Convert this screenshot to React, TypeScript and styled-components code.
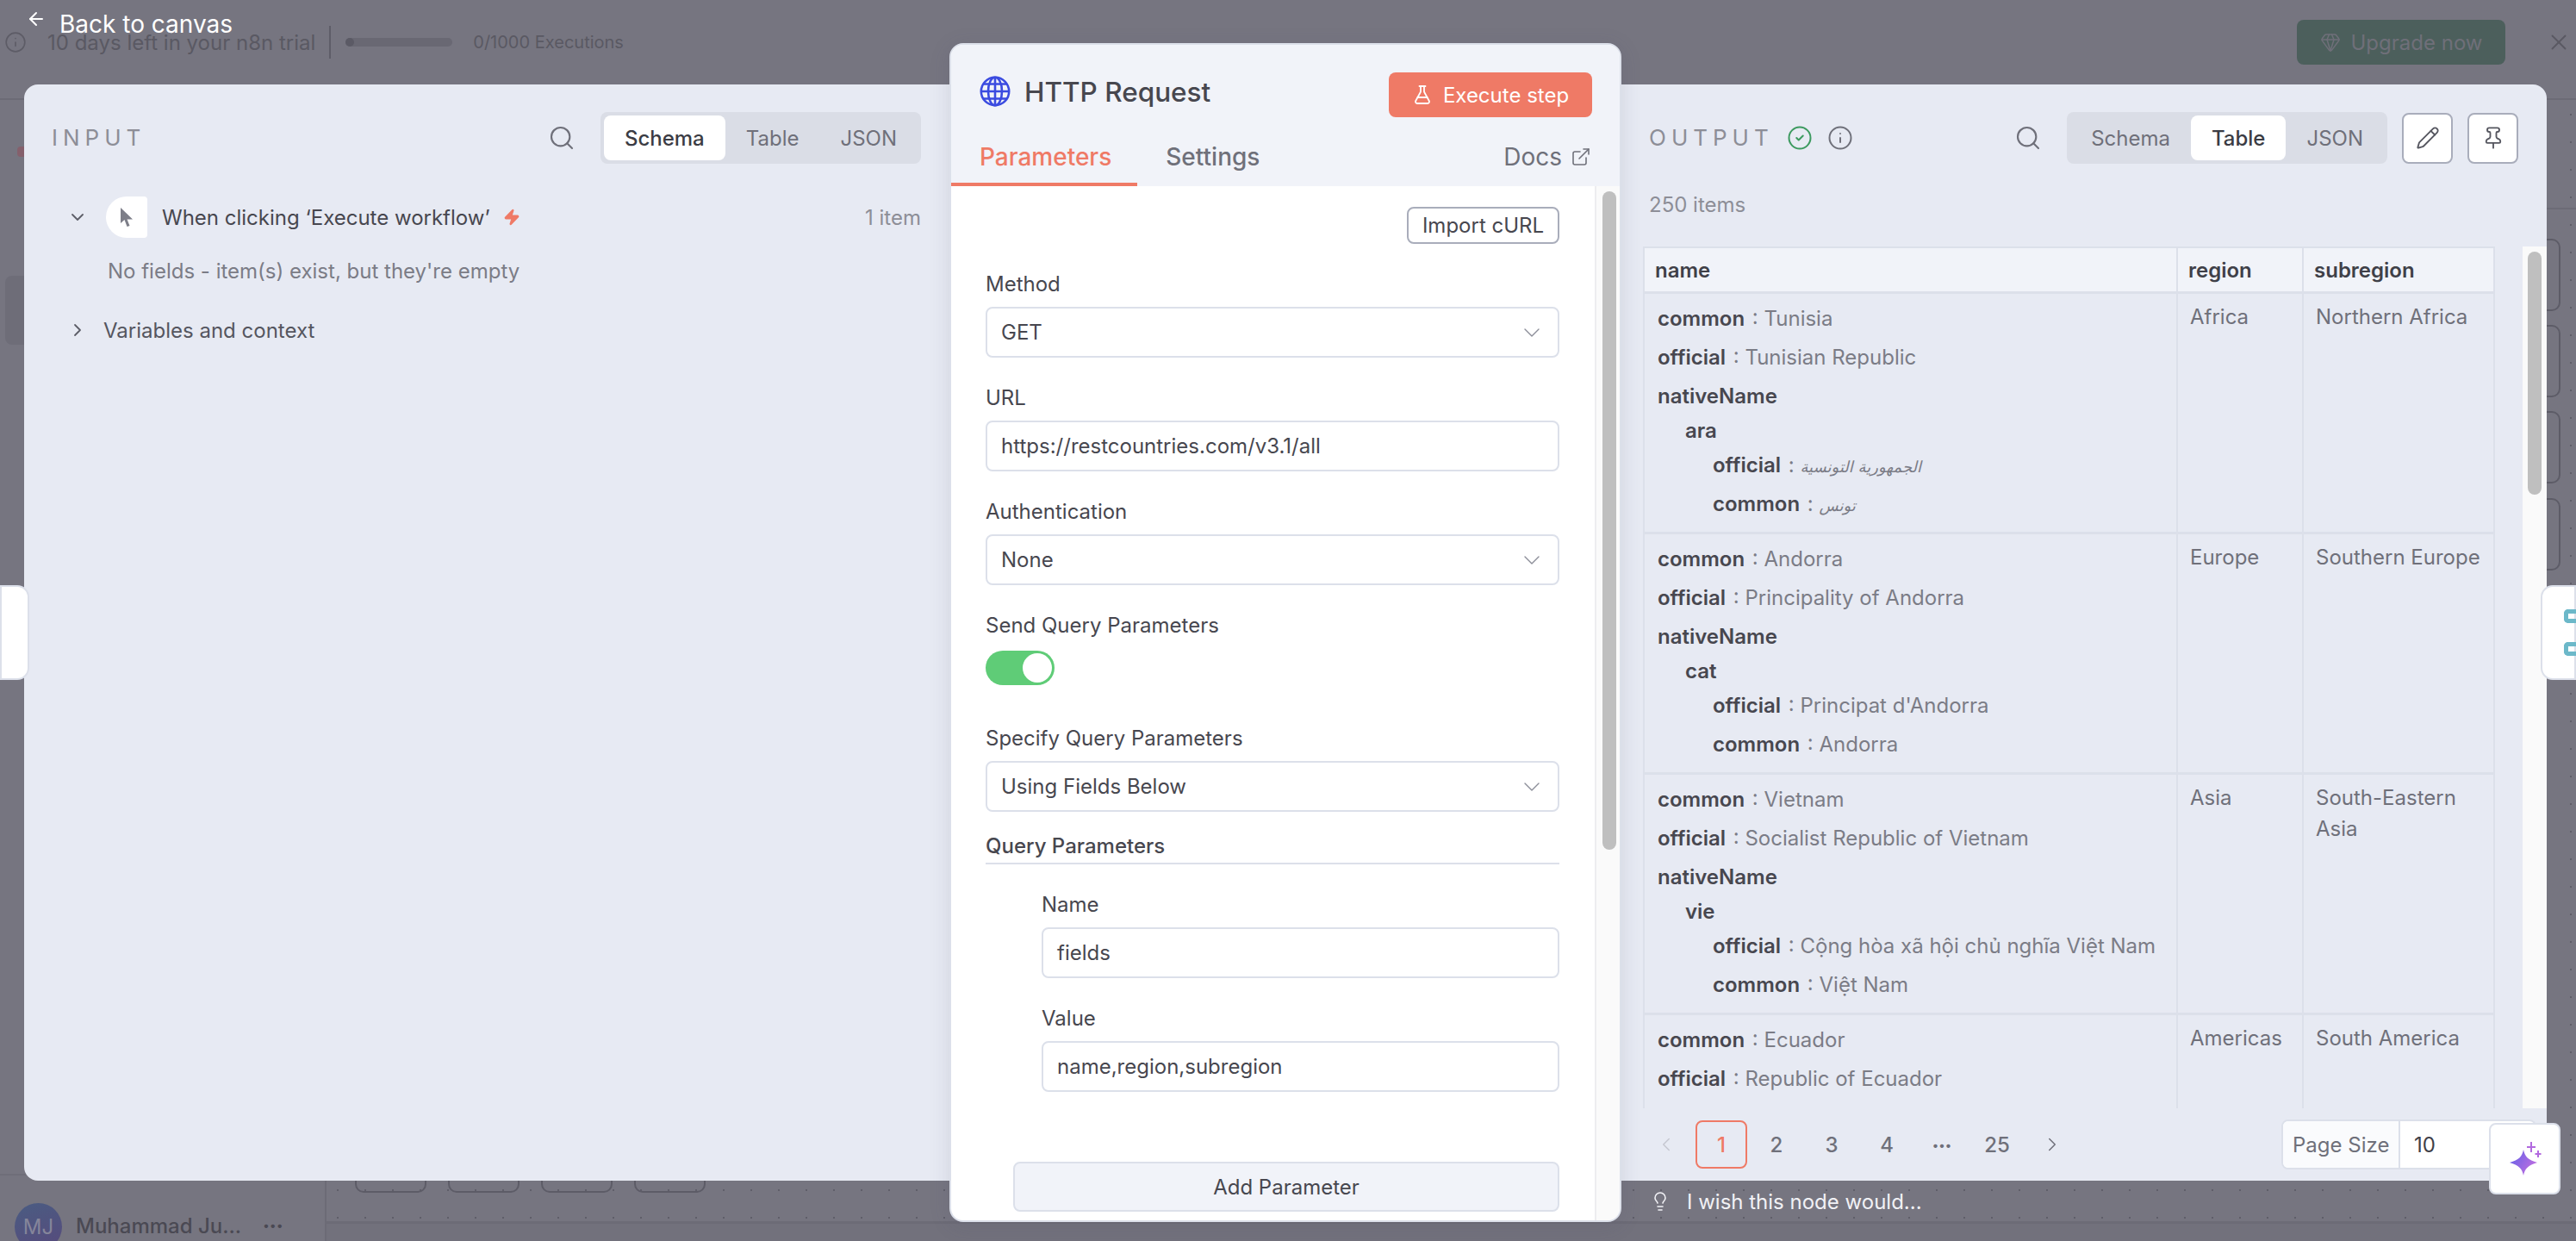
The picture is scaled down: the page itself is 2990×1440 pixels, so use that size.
import { Fragment } from 'react';
import styled, { createGlobalStyle } from 'styled-components';
import {
  ArrowLeft,
  ChevronDown,
  ChevronLeft,
  ChevronRight,
  CircleCheck,
  ExternalLink,
  FlaskConical,
  Gem,
  Info,
  Lightbulb,
  Pencil,
  Pin,
  Search,
  X,
  Zap,
} from 'lucide-react';

type Line = { key: string; value?: string; depth?: number; rtl?: boolean };
type Country = { lines: Line[]; region: string; subregion: string };

const countries: Country[] = [
  {
    region: 'Africa',
    subregion: 'Northern Africa',
    lines: [
      { key: 'common', value: 'Tunisia' },
      { key: 'official', value: 'Tunisian Republic' },
      { key: 'nativeName' },
      { key: 'ara', depth: 1 },
      { key: 'official', value: 'الجمهورية التونسية', depth: 2, rtl: true },
      { key: 'common', value: 'تونس', depth: 2, rtl: true },
    ],
  },
  {
    region: 'Europe',
    subregion: 'Southern Europe',
    lines: [
      { key: 'common', value: 'Andorra' },
      { key: 'official', value: 'Principality of Andorra' },
      { key: 'nativeName' },
      { key: 'cat', depth: 1 },
      { key: 'official', value: "Principat d'Andorra", depth: 2 },
      { key: 'common', value: 'Andorra', depth: 2 },
    ],
  },
  {
    region: 'Asia',
    subregion: 'South-Eastern Asia',
    lines: [
      { key: 'common', value: 'Vietnam' },
      { key: 'official', value: 'Socialist Republic of Vietnam' },
      { key: 'nativeName' },
      { key: 'vie', depth: 1 },
      { key: 'official', value: 'Cộng hòa xã hội chủ nghĩa Việt Nam', depth: 2 },
      { key: 'common', value: 'Việt Nam', depth: 2 },
    ],
  },
  {
    region: 'Americas',
    subregion: 'South America',
    lines: [
      { key: 'common', value: 'Ecuador' },
      { key: 'official', value: 'Republic of Ecuador' },
      { key: 'nativeName' },
    ],
  },
];

const canvasButtons = [33, 141, 249, 357];
const canvasCards = [161, 261, 361, 462];

const GlobeIcon = () => (
  <svg width="36" height="36" viewBox="0 0 36 36" fill="none" stroke="#3b4be0" strokeWidth="2.6">
    <circle cx="18" cy="18" r="16.2" />
    <ellipse cx="18" cy="18" rx="8" ry="16.2" />
    <path d="M18 2v32M2 18h32M4.500 9.500h27M4.500 26.500h27" />
  </svg>
);

const CursorIcon = () => (
  <svg width="16" height="24" viewBox="0 0 16 24" fill="#7d7e88">
    <path d="M1 1v18l4.500-4 3 8 3-1-3-7.500H15z" />
  </svg>
);

const ViewSwitch = ({ active }: { active: string }) => (
  <SwitchWrap>
    {['Schema', 'Table', 'JSON'].map((name) => (
      <SwitchItem key={name} $active={name === active}>
        {name}
      </SwitchItem>
    ))}
  </SwitchWrap>
);

const SelectField = ({ label, value }: { label: string; value: string }) => (
  <Field>
    <FieldLabel>{label}</FieldLabel>
    <Control>
      {value}
      <ChevronDown size={32} strokeWidth={1} color="#8b8d98" />
    </Control>
  </Field>
);

const InputField = ({ label, value }: { label: string; value: string }) => (
  <Field>
    <FieldLabel>{label}</FieldLabel>
    <Control>{value}</Control>
  </Field>
);

const Backdrop = () => (
  <Fragment>
    <TopBar>
      <Info size={26} strokeWidth={1.5} color="#5d5c66" />
      <TrialText>10 days left in your n8n trial</TrialText>
      <TrialDivider />
      <TrialTrack>
        <TrialDot />
      </TrialTrack>
      <TrialText $small>0/1000 Executions</TrialText>
      <UpgradeButton>
        <Gem size={24} strokeWidth={1.5} />
        Upgrade now
      </UpgradeButton>
      <X size={30} strokeWidth={1.5} color="#5a5963" />
    </TopBar>
    <Workspace>
      <Sidebar>
        <LogoPiece />
        <SideItem />
        <SideFooter>
          <Avatar>MJ</Avatar>
          <UserName>Muhammad Ju...</UserName>
          <UserDots>•••</UserDots>
        </SideFooter>
      </Sidebar>
      <Canvas>
        <CanvasHeaderLine />
        {canvasButtons.map((x) => (
          <CanvasButton key={x} $x={x} />
        ))}
        {canvasCards.map((y) => (
          <CanvasCard key={y} $y={y} />
        ))}
        <CanvasFooter />
      </Canvas>
    </Workspace>
  </Fragment>
);

const InputPanel = () => (
  <SidePanel $side="left">
    <PanelHeader>
      <PanelTitle>INPUT</PanelTitle>
      <HeaderSpacer />
      <Search size={32} strokeWidth={1.6} color="#6f707a" />
      <ViewSwitch active="Schema" />
    </PanelHeader>
    <NodeRow>
      <ChevronDown size={24} strokeWidth={1.8} color="#5d5e68" />
      <NodeIcon>
        <CursorIcon />
      </NodeIcon>
      <NodeName>When clicking ‘Execute workflow’</NodeName>
      <Zap size={20} fill="#ef7a66" color="#ef7a66" />
      <ItemCount>1 item</ItemCount>
    </NodeRow>
    <EmptyNote>No fields - item(s) exist, but they're empty</EmptyNote>
    <VariablesRow>
      <ChevronRight size={24} strokeWidth={1.8} color="#5d5e68" />
      Variables and context
    </VariablesRow>
  </SidePanel>
);

const MainPanel = () => (
  <CenterPanel>
    <CenterHead>
      <TitleRow>
        <TitleGroup>
          <GlobeIcon />
          <NodeTitle>HTTP Request</NodeTitle>
        </TitleGroup>
        <ExecuteButton>
          <FlaskConical size={24} strokeWidth={1.8} />
          Execute step
        </ExecuteButton>
      </TitleRow>
      <TabRow>
        <Tab $active>Parameters</Tab>
        <Tab>Settings</Tab>
        <DocsLink>
          Docs
          <ExternalLink size={24} strokeWidth={1.6} />
        </DocsLink>
      </TabRow>
    </CenterHead>
    <CenterBody>
      <Form>
        <ImportRow>
          <ImportButton>Import cURL</ImportButton>
        </ImportRow>
        <SelectField label="Method" value="GET" />
        <InputField label="URL" value="https://restcountries.com/v3.1/all" />
        <SelectField label="Authentication" value="None" />
        <ToggleField>
          <ToggleLabel>Send Query Parameters</ToggleLabel>
          <Toggle>
            <ToggleKnob />
          </Toggle>
        </ToggleField>
        <SelectField label="Specify Query Parameters" value="Using Fields Below" />
        <SectionTitle>Query Parameters</SectionTitle>
        <ParamGroup>
          <InputField label="Name" value="fields" />
          <InputField label="Value" value="name,region,subregion" />
        </ParamGroup>
        <AddParameter>Add Parameter</AddParameter>
      </Form>
      <Scrollbar $wide>
        <FormThumb />
      </Scrollbar>
    </CenterBody>
  </CenterPanel>
);

const OutputPanel = () => (
  <SideColumn>
    <SidePanel $side="right">
      <PanelHeader>
        <PanelTitle>OUTPUT</PanelTitle>
        <StatusIcons>
          <CircleCheck size={30} strokeWidth={1.6} color="#3c9a5f" />
          <Info size={30} strokeWidth={1.6} color="#6f707a" />
        </StatusIcons>
        <HeaderSpacer />
        <Search size={32} strokeWidth={1.6} color="#6f707a" />
        <ViewSwitch active="Table" />
        <IconButton>
          <Pencil size={28} strokeWidth={1.6} />
        </IconButton>
        <IconButton>
          <Pin size={28} strokeWidth={1.6} />
        </IconButton>
      </PanelHeader>
      <ItemsLabel>250 items</ItemsLabel>
      <TableArea>
        <TableClip>
          <DataTable>
            <colgroup>
              <col width={619} />
              <col width={146} />
              <col width={222} />
            </colgroup>
            <thead>
              <tr>
                <HeadCell>name</HeadCell>
                <HeadCell>region</HeadCell>
                <HeadCell>subregion</HeadCell>
              </tr>
            </thead>
            <tbody>
              {countries.map((country) => (
                <tr key={country.region}>
                  <NameCell>
                    {country.lines.map((line, index) => (
                      <TreeLine key={index} $depth={line.depth ?? 0}>
                        <TreeKey>{line.key}</TreeKey>
                        {line.value && (
                          <TreeValue>
                            {' : '}
                            {line.rtl ? <ArabicText>{line.value}</ArabicText> : line.value}
                          </TreeValue>
                        )}
                      </TreeLine>
                    ))}
                  </NameCell>
                  <TextCell>{country.region}</TextCell>
                  <TextCell>{country.subregion}</TextCell>
                </tr>
              ))}
            </tbody>
          </DataTable>
        </TableClip>
        <Scrollbar>
          <TableThumb />
        </Scrollbar>
      </TableArea>
      <Pager>
        <PageSlot $muted>
          <ChevronLeft size={26} strokeWidth={1.4} />
        </PageSlot>
        <PageSlot $active>1</PageSlot>
        <PageSlot>2</PageSlot>
        <PageSlot>3</PageSlot>
        <PageSlot>4</PageSlot>
        <PageSlot $dots>•••</PageSlot>
        <PageSlot>25</PageSlot>
        <PageSlot>
          <ChevronRight size={26} strokeWidth={1.4} />
        </PageSlot>
        <PageSize>
          <PageSizeLabel>Page Size</PageSizeLabel>
          <PageSizeValue>10</PageSizeValue>
        </PageSize>
      </Pager>
      <AskButton>
        <svg width="46" height="46" viewBox="0 0 46 46">
          <defs>
            <linearGradient id="spark" x1="0" y1="0" x2="1" y2="0.6">
              <stop offset="0" stopColor="#5d5fe8" />
              <stop offset="1" stopColor="#c06fe0" />
            </linearGradient>
          </defs>
          <path
            d="M21 12c1.500 8 5.500 12 16 15-10.500 3-14.500 7-16 15-1.500-8-5.500-12-16-15 10.500-3 14.500-7 16-15z"
            fill="url(#spark)"
          />
          <path d="M30 3v12M25 9h10M38 13v8M34.500 17h7" stroke="#b26adf" strokeWidth="2" />
        </svg>
      </AskButton>
    </SidePanel>
    <FeedbackRow>
      <Lightbulb size={24} strokeWidth={1.6} />
      I wish this node would...
    </FeedbackRow>
  </SideColumn>
);

export default function App() {
  return (
    <Page>
      <GlobalStyle />
      <Backdrop />
      <Overlay>
        <BackLink>
          <ArrowLeft size={24} strokeWidth={2} />
          <BackText>Back to canvas</BackText>
        </BackLink>
        <InputPanel />
        <MainPanel />
        <OutputPanel />
        <EdgeHandle $side="left" />
        <EdgeHandle $side="right">
          <HandleMark />
          <HandleMark />
        </EdgeHandle>
      </Overlay>
    </Page>
  );
}

const GlobalStyle = createGlobalStyle`
  html, body {
    margin: 0;
    padding: 0;
    background: #767580;
  }
  * {
    box-sizing: border-box;
  }
`;

const Page = styled.div`
  position: relative;
  width: 2990px;
  height: 1440px;
  overflow: hidden;
  background: #767580;
  font-family: Inter, 'Liberation Sans', sans-serif;
  font-size: 24px;
  color: #47474f;
`;

const TopBar = styled.div`
  height: 116px;
  padding: 0 5px 16px 5px;
  display: flex;
  align-items: center;
  border-bottom: 2px solid #6c6b76;
`;

const TrialText = styled.span<{ $small?: boolean }>`
  margin-left: 24px;
  font-size: ${(p) => (p.$small ? 20 : 24)}px;
  color: #5a5963;
`;

const TrialDivider = styled.div`
  width: 2px;
  height: 38px;
  margin-left: 16px;
  background: #5e5d68;
`;

const TrialTrack = styled.div`
  width: 124px;
  height: 10px;
  margin-left: 17px;
  border-radius: 5px;
  background: #696873;
`;

const TrialDot = styled.div`
  width: 10px;
  height: 10px;
  border-radius: 50%;
  background: #5b5a65;
`;

const UpgradeButton = styled.div`
  width: 242px;
  height: 52px;
  margin-left: auto;
  margin-right: 47px;
  display: flex;
  align-items: center;
  justify-content: center;
  gap: 12px;
  border-radius: 8px;
  background: #4c5f5c;
  color: #6f6f79;
`;

const Workspace = styled.div`
  height: 1324px;
  display: flex;
`;

const Sidebar = styled.div`
  position: relative;
  width: 379px;
  border-right: 2px solid #6c6b76;
`;

const LogoPiece = styled.div`
  position: absolute;
  left: 20px;
  top: 54px;
  width: 8px;
  height: 12px;
  border-radius: 4px 0 0 4px;
  background: #85606c;
`;

const SideItem = styled.div`
  position: absolute;
  left: 6px;
  top: 204px;
  width: 30px;
  height: 80px;
  border-radius: 8px;
  background: #6e6d78;
`;

const SideFooter = styled.div`
  position: absolute;
  left: 0;
  right: 0;
  top: 1246px;
  height: 80px;
  padding: 32px 0 0 17px;
  display: flex;
  align-items: flex-start;
  border-top: 2px solid #6f6e79;
`;

const Avatar = styled.div`
  width: 55px;
  height: 55px;
  flex-shrink: 0;
  display: flex;
  align-items: center;
  justify-content: center;
  border-radius: 50%;
  background: linear-gradient(160deg, #4a5c82, #574a7c);
  color: #85859a;
  font-size: 24px;
`;

const UserName = styled.div`
  margin: 12px 0 0 16px;
  color: #4a4953;
  font-weight: 500;
`;

const UserDots = styled.div`
  margin: 14px 0 0 25px;
  color: #4a4953;
  font-size: 14px;
  line-height: 24px;
`;

const Canvas = styled.div`
  position: relative;
  flex: 1;
  background-color: #767580;
  background-image: radial-gradient(circle, #5f5e69 1px, transparent 1.4px);
  background-size: 32px 32px;
  background-position: -3px 1px;
`;

const CanvasHeaderLine = styled.div`
  position: absolute;
  left: 0;
  right: 0;
  top: 125px;
  height: 2px;
  background: #6c6b76;
`;

const CanvasButton = styled.div<{ $x: number }>`
  position: absolute;
  left: ${(p) => p.$x}px;
  top: 1200px;
  width: 83px;
  height: 68px;
  border: 2px solid #5d5c67;
  border-radius: 10px;
`;

const CanvasCard = styled.div<{ $y: number }>`
  position: absolute;
  right: 18px;
  top: ${(p) => p.$y}px;
  width: 80px;
  height: 84px;
  border: 2px solid #5d5c67;
  border-radius: 10px;
`;

const CanvasFooter = styled.div`
  position: absolute;
  left: 0;
  right: 0;
  top: 1301px;
  height: 23px;
  border-top: 3px solid #6c6b76;
  background: #72717c;
`;

const Overlay = styled.div`
  position: absolute;
  inset: 0;
  padding: 50px 34px 0 28px;
  display: flex;
  align-items: flex-start;
`;

const BackLink = styled.div`
  position: absolute;
  left: 30px;
  top: 10px;
  display: flex;
  align-items: flex-start;
  gap: 15px;
  color: #fff;
`;

const BackText = styled.span`
  margin-top: 2px;
  font-size: 28px;
  line-height: 32px;
`;

const SideColumn = styled.div`
  width: 1074px;
  display: flex;
  flex-direction: column;
`;

const SidePanel = styled.section<{ $side: 'left' | 'right' }>`
  position: relative;
  width: 1074px;
  height: 1272px;
  margin-top: 48px;
  padding: 32px 33px 0 32px;
  display: flex;
  flex-direction: column;
  background: #e7eaf3;
  border-radius: ${(p) => (p.$side === 'left' ? '16px 0 0 16px' : '0 16px 16px 0')};
`;

const PanelHeader = styled.div`
  height: 60px;
  display: flex;
  align-items: center;
`;

const PanelTitle = styled.div`
  color: #8d8e97;
  font-size: 26px;
  letter-spacing: 6px;
  line-height: 32px;
`;

const HeaderSpacer = styled.div`
  flex: 1;
`;

const StatusIcons = styled.div`
  margin-left: 15px;
  display: flex;
  align-items: center;
  gap: 17px;
`;

const SwitchWrap = styled.div`
  height: 60px;
  margin-left: 29px;
  padding: 4px;
  display: flex;
  border-radius: 8px;
  background: #dadde6;
`;

const SwitchItem = styled.div<{ $active?: boolean }>`
  height: 52px;
  padding: 0 24px;
  display: flex;
  align-items: center;
  border-radius: 8px;
  background: ${(p) => (p.$active ? '#fff' : 'transparent')};
  color: ${(p) => (p.$active ? '#3b3c44' : '#6f707a')};
  font-weight: ${(p) => (p.$active ? 500 : 400)};
`;

const IconButton = styled.div`
  width: 59px;
  height: 59px;
  margin-left: 17px;
  display: flex;
  align-items: center;
  justify-content: center;
  background: #fff;
  border: 2px solid #a9adbb;
  border-radius: 8px;
  color: #55565f;
`;

const NodeRow = styled.div`
  height: 48px;
  margin: 38px 0 0 18px;
  display: flex;
  align-items: center;
`;

const NodeIcon = styled.div`
  width: 48px;
  height: 48px;
  margin-left: 21px;
  display: flex;
  align-items: center;
  justify-content: center;
  background: #fff;
  border-radius: 24px 4px 4px 24px;
`;

const NodeName = styled.div`
  margin: 0 15px 0 17px;
  color: #47474f;
`;

const ItemCount = styled.div`
  margin-left: auto;
  color: #8d8e97;
`;

const EmptyNote = styled.div`
  margin: 21px 0 0 65px;
  line-height: 36px;
  color: #7b7c86;
`;

const VariablesRow = styled.div`
  height: 36px;
  margin: 32px 0 0 18px;
  display: flex;
  align-items: center;
  gap: 18px;
  color: #55565f;
`;

const ItemsLabel = styled.div`
  margin-top: 30px;
  line-height: 36px;
  color: #8d8e97;
`;

const TableArea = styled.div`
  height: 1000px;
  margin: 30px -33px 0 -7px;
  display: flex;
  justify-content: space-between;
`;

const TableClip = styled.div`
  width: 989px;
  height: 1000px;
  overflow: hidden;
`;

const DataTable = styled.table`
  width: 989px;
  table-layout: fixed;
  border-collapse: separate;
  border-spacing: 0;
  border-left: 2px solid #dce0ea;
`;

const HeadCell = styled.th`
  height: 55px;
  padding: 0 12px;
  text-align: left;
  font-size: 24px;
  font-weight: 600;
  color: #3f4048;
  background: #f1f3f9;
  border-top: 2px solid #dce0ea;
  border-right: 2px solid #dce0ea;
  border-bottom: 3px solid #dce0ea;
`;

const NameCell = styled.td`
  padding: 6px 0 10px 15px;
  vertical-align: top;
  border-right: 2px solid #dce0ea;
  border-bottom: 3px solid #dce0ea;
`;

const TextCell = styled.td`
  padding: 9px 14px;
  vertical-align: top;
  line-height: 36px;
  color: #6f707a;
  border-right: 2px solid #dce0ea;
  border-bottom: 3px solid #dce0ea;
`;

const TreeLine = styled.div<{ $depth: number }>`
  height: ${(p) => (p.$depth === 1 ? 35 : 45)}px;
  padding-left: ${(p) => p.$depth * 32}px;
  display: flex;
  align-items: center;
  white-space: pre;
`;

const TreeKey = styled.span`
  font-weight: 600;
  color: #47474f;
`;

const TreeValue = styled.span`
  margin-left: 2px;
  color: #7b7c86;
`;

const ArabicText = styled.span`
  font-family: 'DejaVu Sans', sans-serif;
  font-size: 18px;
  font-style: italic;
`;

const Scrollbar = styled.div<{ $wide?: boolean }>`
  width: ${(p) => (p.$wide ? 29 : 28)}px;
  flex-shrink: 0;
  padding: 6px 6px 0 ${(p) => (p.$wide ? 7 : 6)}px;
  background: #fafafa;
  border-left: ${(p) => (p.$wide ? '2px solid #ededf0' : 'none')};
`;

const TableThumb = styled.div`
  width: 16px;
  height: 282px;
  border-radius: 8px;
  background: #bfbfbf;
`;

const FormThumb = styled(TableThumb)`
  height: 764px;
`;

const Pager = styled.div`
  height: 84px;
  margin: 0 -21px 0 -10px;
  display: flex;
  align-items: center;
  gap: 4px;
`;

const PageSlot = styled.div<{ $active?: boolean; $muted?: boolean; $dots?: boolean }>`
  width: 60px;
  height: 56px;
  display: flex;
  align-items: center;
  justify-content: center;
  font-size: ${(p) => (p.$dots ? 14 : 24)}px;
  font-weight: 500;
  border-radius: 8px;
  border: 2px solid ${(p) => (p.$active ? '#ef7a66' : 'transparent')};
  color: ${(p) => (p.$active ? '#ef7a66' : p.$muted ? '#c6c8d1' : '#6f707a')};
`;

const PageSize = styled.div`
  width: 296px;
  height: 58px;
  margin-left: auto;
  display: flex;
  background: #fff;
  border: 2px solid #dce0ea;
  border-radius: 8px;
  overflow: hidden;
`;

const PageSizeLabel = styled.div`
  width: 136px;
  padding-left: 11px;
  display: flex;
  align-items: center;
  background: #fafbfd;
  border-right: 2px solid #dce0ea;
  color: #6f707a;
`;

const PageSizeValue = styled.div`
  padding-left: 16px;
  display: flex;
  align-items: center;
  color: #3f4048;
`;

const AskButton = styled.div`
  position: absolute;
  left: 1007px;
  top: 1205px;
  width: 83px;
  height: 83px;
  display: flex;
  align-items: center;
  justify-content: center;
  background: #fff;
  border: 2px solid #dce0ea;
  border-radius: 8px;
`;

const FeedbackRow = styled.div`
  height: 36px;
  margin: 6px 0 0 33px;
  display: flex;
  align-items: center;
  gap: 19px;
  color: #f1f1f5;
`;

const CenterPanel = styled.section`
  position: relative;
  z-index: 1;
  width: 780px;
  height: 1368px;
  flex-shrink: 0;
  overflow: hidden;
  background: #fff;
  border: 2px solid #dce0ea;
  border-radius: 16px;
  box-shadow: 0 4px 24px rgba(70, 74, 96, 0.14);
`;

const CenterHead = styled.div`
  height: 164px;
  display: flex;
  flex-direction: column;
  background: #f1f3f9;
`;

const TitleRow = styled.div`
  height: 52px;
  margin-top: 32px;
  padding: 0 32px 0 33px;
  display: flex;
  align-items: center;
`;

const TitleGroup = styled.div`
  margin-bottom: 8px;
  display: flex;
  align-items: center;
  gap: 16px;
`;

const NodeTitle = styled.div`
  font-size: 31.5px;
  font-weight: 500;
  color: #47474f;
`;

const ExecuteButton = styled.div`
  width: 236px;
  height: 52px;
  margin-left: auto;
  display: flex;
  align-items: center;
  justify-content: center;
  gap: 12px;
  border-radius: 8px;
  background: #ef7a66;
  color: #fff;
  font-size: 24px;
`;

const TabRow = styled.div`
  height: 68px;
  margin-top: 12px;
  display: flex;
  align-items: stretch;
`;

const Tab = styled.div<{ $active?: boolean }>`
  padding: 4px 30px 0 33px;
  display: flex;
  align-items: center;
  font-size: 28px;
  font-weight: 500;
  color: ${(p) => (p.$active ? '#ef7a66' : '#6f707a')};
  border-bottom: 4px solid ${(p) => (p.$active ? '#ef7a66' : 'transparent')};
`;

const DocsLink = styled.div`
  margin-left: auto;
  padding: 0 33px 0 0;
  display: flex;
  align-items: center;
  gap: 10px;
  font-size: 28px;
  color: #6f707a;
`;

const CenterBody = styled.div`
  height: 1200px;
  display: flex;
`;

const Form = styled.div`
  flex: 1;
  padding: 24px 41px 0 40px;
`;

const ImportRow = styled.div`
  display: flex;
  justify-content: flex-end;
`;

const ImportButton = styled.div`
  width: 177px;
  height: 43px;
  display: flex;
  align-items: center;
  justify-content: center;
  background: #fff;
  border: 2px solid #a9adbb;
  border-radius: 8px;
  color: #47474f;
`;

const Field = styled.div`
  margin-top: 31px;
`;

const FieldLabel = styled.div`
  height: 32px;
  margin-bottom: 10px;
  line-height: 32px;
  color: #47474f;
`;

const Control = styled.div`
  height: 59px;
  padding: 0 14px 0 16px;
  display: flex;
  align-items: center;
  justify-content: space-between;
  background: #fff;
  border: 2px solid #dce0ea;
  border-radius: 8px;
  color: #47474f;
`;

const ToggleField = styled.div`
  margin-top: 31px;
  padding-bottom: 15px;
`;

const ToggleLabel = styled.div`
  height: 32px;
  line-height: 32px;
`;

const Toggle = styled.div`
  width: 80px;
  height: 40px;
  margin-top: 13px;
  padding: 3px;
  display: flex;
  justify-content: flex-end;
  border-radius: 20px;
  background: #5fcc77;
`;

const ToggleKnob = styled.div`
  width: 34px;
  height: 34px;
  border-radius: 50%;
  background: #fff;
`;

const SectionTitle = styled.div`
  height: 40px;
  margin-top: 21px;
  line-height: 38px;
  font-weight: 500;
  border-bottom: 2px solid #dce0ea;
`;

const ParamGroup = styled.div`
  padding-left: 65px;
`;

const AddParameter = styled.div`
  height: 58px;
  margin: 81px 0 0 32px;
  display: flex;
  align-items: center;
  justify-content: center;
  background: #f1f3f9;
  border: 2px solid #dce0ea;
  border-radius: 8px;
  color: #47474f;
`;

const EdgeHandle = styled.div<{ $side: 'left' | 'right' }>`
  position: absolute;
  ${(p) => (p.$side === 'left' ? 'left: 0;' : 'right: 0;')}
  top: 679px;
  width: ${(p) => (p.$side === 'left' ? 34 : 41)}px;
  height: 110px;
  z-index: 2;
  padding-left: 25px;
  display: flex;
  flex-direction: column;
  justify-content: center;
  gap: 22px;
  background: #fff;
  border: 2px solid #dce0ea;
  border-radius: ${(p) => (p.$side === 'left' ? '0 14px 14px 0' : '14px 0 0 14px')};
`;

const HandleMark = styled.div`
  width: 14px;
  height: 16px;
  flex-shrink: 0;
  border: 5px solid #6cb8c9;
  border-right: none;
  border-radius: 5px 0 0 5px;
`;
